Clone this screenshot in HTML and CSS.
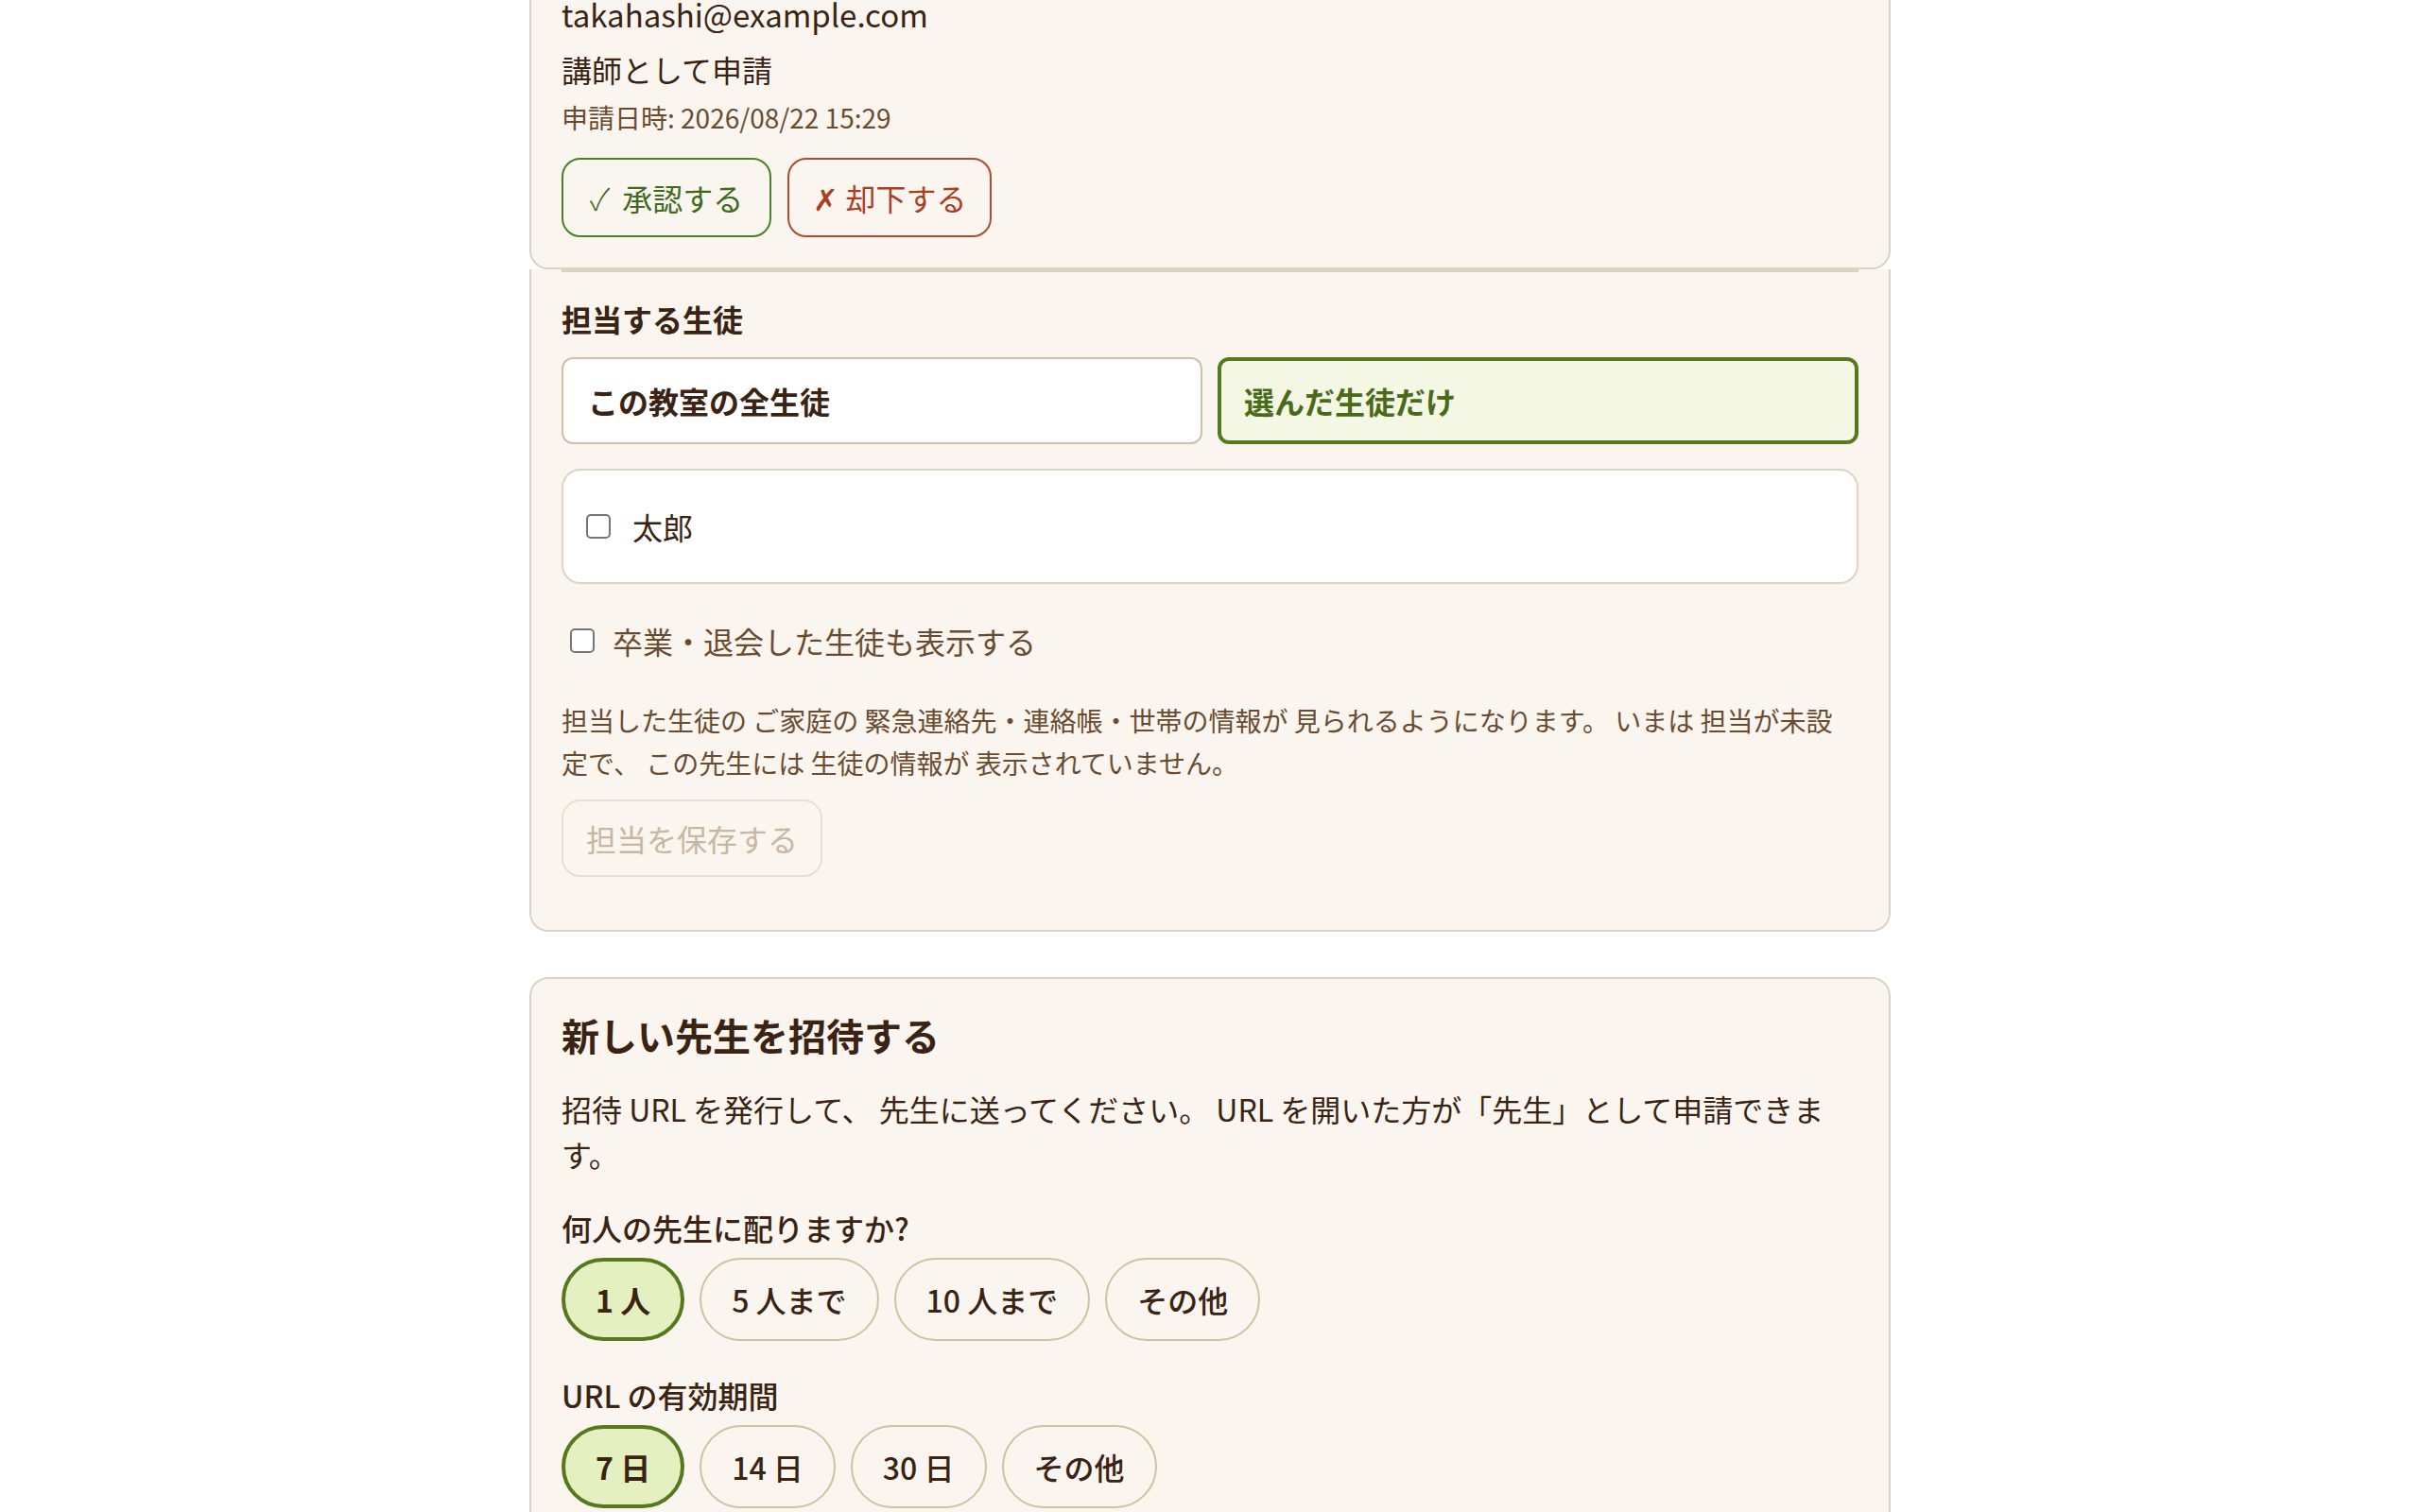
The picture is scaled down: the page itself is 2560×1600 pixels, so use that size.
FILE: index.html
```html
<!DOCTYPE html>
<html lang="ja">
<head>
<meta charset="utf-8">
<title>先生の管理</title>
<link rel="stylesheet" href="styles.css">
</head>
<body>
<main class="page">
  <section class="card request">
    <div class="req-email">takahashi@example.com</div>
    <div class="req-role">講師として申請</div>
    <div class="req-date">申請日時: 2026/08/22 15:29</div>
    <div class="req-actions">
      <button class="btn btn-approve" type="button"><span class="btn-icon">✓</span> 承認する</button>
      <button class="btn btn-reject" type="button"><span class="btn-icon">✗</span> 却下する</button>
    </div>
  </section>

  <section class="card assign">
    <div class="divider"></div>
    <h3 class="field-label">担当する生徒</h3>
    <div class="scope">
      <button class="scope-opt" type="button">この教室の全生徒</button>
      <button class="scope-opt is-selected" type="button">選んだ生徒だけ</button>
    </div>
    <div class="student-list">
      <label class="check"><input type="checkbox"><span>太郎</span></label>
    </div>
    <label class="check check-muted"><input type="checkbox"><span>卒業・退会した生徒も表示する</span></label>
    <p class="note">担当した生徒の ご家庭の 緊急連絡先・連絡帳・世帯の情報が 見られるようになります。 いまは 担当が未設定で、 この先生には 生徒の情報が 表示されていません。</p>
    <button class="btn btn-save" type="button" disabled>担当を保存する</button>
  </section>

  <section class="card invite">
    <h2 class="card-title">新しい先生を招待する</h2>
    <p class="lead">招待 URL を発行して、 先生に送ってください。 URL を開いた方が「先生」として申請できます。</p>
    <div class="group">
      <div class="group-label">何人の先生に配りますか?</div>
      <div class="pills">
        <button class="pill is-selected" type="button">1 人</button>
        <button class="pill" type="button">5 人まで</button>
        <button class="pill" type="button">10 人まで</button>
        <button class="pill" type="button">その他</button>
      </div>
    </div>
    <div class="group">
      <div class="group-label">URL の有効期間</div>
      <div class="pills">
        <button class="pill is-selected" type="button">7 日</button>
        <button class="pill" type="button">14 日</button>
        <button class="pill" type="button">30 日</button>
        <button class="pill" type="button">その他</button>
      </div>
    </div>
  </section>
</main>
</body>
</html>
```

FILE: styles.css
```css
* { box-sizing: border-box; }

html, body {
  margin: 0;
  background: #ffffff;
}

body {
  font-family: "Noto Sans CJK JP", "Noto Sans", sans-serif;
  font-size: 32px;
  line-height: 1.5;
  color: #3a2312;
}

.page {
  max-width: 1440px;
  margin: -46px auto 0;
}

.card {
  background: #faf6ef;
  border: 2px solid #dcd2c1;
  border-radius: 20px;
  padding: 32px;
}

/* request card */
.req-email {
  font-size: 33px;
  line-height: 54px;
}

.req-role {
  margin-top: 7px;
  line-height: 48px;
}

.req-date {
  margin-top: 6px;
  font-size: 28px;
  line-height: 42px;
  color: #6b4b30;
}

.req-actions {
  margin-top: 22px;
  display: flex;
  gap: 17px;
}

.btn {
  font: inherit;
  line-height: 48px;
  height: 84px;
  padding: 0 28px;
  border: 2px solid;
  border-radius: 20px;
  background: transparent;
}

.btn-icon {
  display: inline-block;
  margin-right: 6px;
  font-weight: 300;
}

.btn-approve {
  border-color: #4b7f2b;
  color: #3f6a1f;
}

.btn-reject {
  padding: 0 25px;
  border-color: #b44a2b;
  color: #a8401f;
}

.btn-reject .btn-icon {
  margin-right: 0;
}

/* assign card */
.assign {
  border-top: none;
  border-radius: 0 0 20px 20px;
  padding: 0 32px 56px;
}

.divider {
  height: 3px;
  background: #dcd2c1;
}

.field-label {
  margin: 25px 0 17px;
  font-size: 32px;
  font-weight: 700;
  line-height: 48px;
}

.scope {
  display: grid;
  grid-template-columns: 1fr 1fr;
  gap: 16px;
}

.scope-opt {
  font: inherit;
  font-weight: 700;
  line-height: 48px;
  height: 92px;
  text-align: left;
  padding: 0 26px;
  background: #ffffff;
  border: 2px solid #cfc1a1;
  border-radius: 12px;
  color: #3a2312;
}

.scope-opt.is-selected {
  padding: 0 24px;
  background: #f3f7e3;
  border: 4px solid #557a1e;
  color: #4a6a1a;
}

.student-list {
  margin-top: 26px;
  background: #ffffff;
  border: 2px solid #ddd3c2;
  border-radius: 20px;
  padding: 35px 24px;
}

.check {
  display: flex;
  align-items: center;
  gap: 23px;
  line-height: 48px;
}

.check input {
  appearance: none;
  -webkit-appearance: none;
  flex: none;
  margin: 0;
  width: 26px;
  height: 26px;
  border: 2px solid #767676;
  border-radius: 5px;
  background: #ffffff;
}

.check-muted {
  margin-top: 36px;
  padding-left: 9px;
  gap: 19px;
  color: #6b4b30;
}

.note {
  margin: 38px 0 0;
  font-size: 28px;
  line-height: 44.8px;
  color: #6b4b30;
}

.btn-save {
  margin-top: 16px;
  height: 82px;
  padding: 0 24px;
  border-color: #e6dece;
  color: #c6b8a2;
}

/* invite card */
.invite {
  margin-top: 48px;
}

.card-title {
  margin: 0;
  font-size: 40px;
  font-weight: 700;
  line-height: 54px;
}

.lead {
  margin: 27px 0 0;
  line-height: 48px;
}

.group {
  margin-top: 30px;
}

.group + .group {
  margin-top: 33px;
}

.group-label {
  font-weight: 500;
  line-height: 48px;
}

.pills {
  margin-top: 8px;
  display: flex;
  gap: 16px;
}

.pill {
  font: inherit;
  font-weight: 500;
  line-height: 48px;
  height: 88px;
  padding: 0 32px;
  border: 2px solid #cfc1a1;
  border-radius: 999px;
  background: transparent;
  color: #3a2312;
}

.pill.is-selected {
  border: 4px solid #557a1e;
  background: #e5f0c0;
  font-weight: 700;
}
```
